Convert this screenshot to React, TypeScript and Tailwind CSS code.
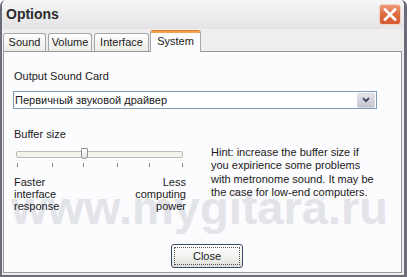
import React from 'react';

const font = { fontFamily: '"Liberation Sans", Arial, sans-serif' };

const tabs = [
  { label: 'Sound', w: 'w-[43px]' },
  { label: 'Volume', w: 'w-[44px]' },
  { label: 'Interface', w: 'w-[55px]' },
];

const ticks = ['left-[3px]', 'left-[38px]', 'left-[69px]', 'left-[103px]', 'left-[135px]', 'left-[168px]'];

function CloseX() {
  return (
    <div className="w-[22px] h-[21px] rounded-[3px] border border-[#f3d2c4] bg-gradient-to-b from-[#ee9a78] via-[#e06c42] to-[#d45a30] flex items-center justify-center">
      <svg width="14" height="13" viewBox="0 0 14 13">
        <path d="M2 1.5 L12 11.5 M12 1.5 L2 11.5" stroke="#ffffff" strokeWidth="2.6" strokeLinecap="square" />
      </svg>
    </div>
  );
}

export default function App() {
  return (
    <div
      className="w-[407px] h-[277px] flex flex-col bg-[#efeeec] border-l-2 border-r-[3px] border-b-2 border-[#6b6b7a] rounded-t-[6px] overflow-hidden text-[#1a1a1a]"
      style={font}
    >
      {/* title bar */}
      <div className="h-[29px] flex items-center justify-between pl-[4px] pr-[3px] bg-gradient-to-b from-[#f6f6f6] to-[#e4e4e6]">
        <span className="text-[14px] font-bold text-[#2b2b2b]">Options</span>
        <CloseX />
      </div>

      {/* tabs */}
      <div className="h-[22px] flex items-end pl-[1px] gap-[2px] text-[11px]">
        {tabs.map((t) => (
          <div
            key={t.label}
            className={`${t.w} h-[18px] flex items-center justify-center border border-b-0 border-[#a3a8ad] rounded-t-[3px] bg-gradient-to-b from-[#ffffff] to-[#ecebe6]`}
          >
            {t.label}
          </div>
        ))}
        <div className="w-[51px] h-[22px] -mb-px -ml-[1px] relative z-10 flex flex-col bg-[#fcfcfe] border-x border-[#a3a8ad] rounded-t-[3px] overflow-hidden">
          <div className="h-[3px] bg-[#f2a24c] border-t border-[#e6802c]" />
          <div className="flex-1 flex items-center justify-center pb-[2px]">System</div>
        </div>
      </div>

      {/* panel */}
      <div className="flex-1 relative ml-[1px] mr-[2px] mb-[2px] border border-[#919b9c] bg-[#fcfcfe] overflow-hidden">
        <div className="absolute left-[7px] top-[132px] text-[47px] leading-[48px] font-bold text-[#e3e3ea] whitespace-nowrap select-none">
          www.mygitara.ru
        </div>

        <div className="relative h-full flex flex-col pl-[10px] pt-[18px] pb-[4px] text-[11px]">
          <div className="leading-[13px]">Output Sound Card</div>

          <div className="mt-[8px] -ml-[1px] w-[364px] h-[18px] flex items-center border border-[#7f9db9] bg-white">
            <span className="flex-1 pl-[1px] leading-[13px]">Первичный звуковой драйвер</span>
            <div className="w-[18px] h-[15px] mr-[1px] flex items-center justify-center rounded-[2px] bg-gradient-to-b from-[#e4e4ec] to-[#c4c4d0] border border-[#d8d8e0]">
              <svg width="8" height="6" viewBox="0 0 8 6">
                <path d="M1 1.2 L4 4.2 L7 1.2" fill="none" stroke="#3c4058" strokeWidth="1.8" />
              </svg>
            </div>
          </div>

          <div className="mt-[19px] leading-[13px]">Buffer size</div>

          <div className="flex items-start">
            <div className="w-[172px]">
              <div className="relative mt-[6px] h-[21px]">
                <div className="absolute left-[2px] top-[4px] w-[167px] h-[7px] border border-[#bcbcb4] rounded-[2px] bg-[#f3f2ec]" />
                <div className="absolute left-[67px] top-[1px] w-[7px] h-[11px] border border-[#8a8f96] rounded-b-[3px] rounded-t-[1px] bg-gradient-to-b from-[#ffffff] to-[#e2e2dc]" />
                {ticks.map((l) => (
                  <div key={l} className={`absolute ${l} top-[16px] w-px h-[4px] bg-[#8a8a8a]`} />
                ))}
              </div>
              <div className="mt-[8px] flex justify-between leading-[12px]">
                <div>
                  Faster
                  <br />
                  interface
                  <br />
                  response
                </div>
                <div className="text-right">
                  Less
                  <br />
                  computing
                  <br />
                  power
                </div>
              </div>
            </div>

            <div className="ml-[25px] pt-[5px] leading-[13.3px]">
              Hint: increase the buffer size if
              <br />
              you expirience some problems
              <br />
              with metronome sound. It may be
              <br />
              the case for low-end computers.
            </div>
          </div>

          <div className="mt-auto ml-[157px]">
            <button className="w-[72px] h-[24px] rounded-[3px] border border-[#3a4a6a] bg-gradient-to-b from-[#ffffff] via-[#f4f4f2] to-[#dcdcd8] p-[2px]">
              <div className="w-full h-full border border-dotted border-[#555] flex items-center justify-center text-[11px]">
                Close
              </div>
            </button>
          </div>
        </div>
      </div>
    </div>
  );
}
